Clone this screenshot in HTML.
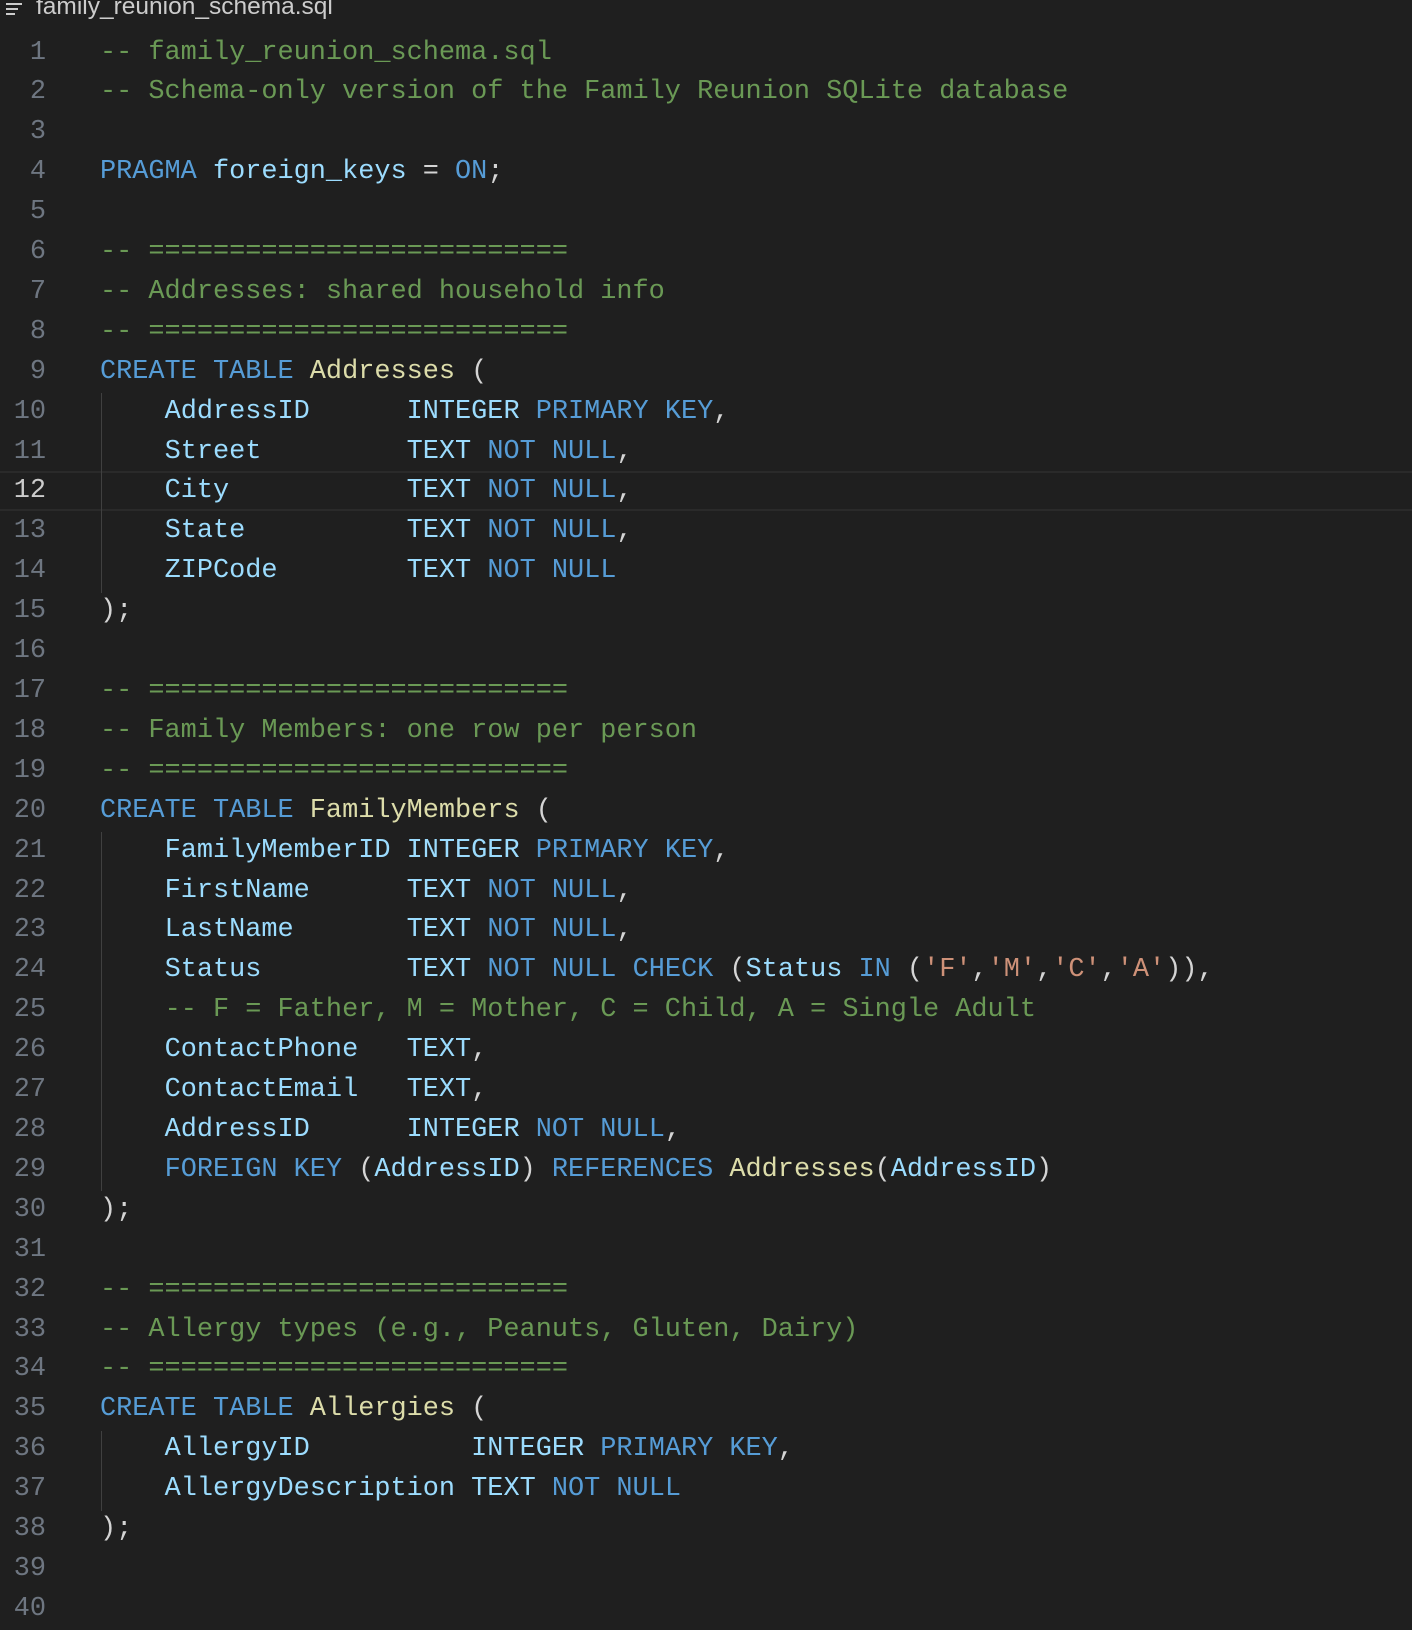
<!DOCTYPE html>
<html><head><meta charset="utf-8"><style>
html,body{margin:0;padding:0;background:#1f1f1f;width:1412px;height:1603px;overflow:hidden}
.title{position:absolute;left:36px;top:-7px;font-family:"Liberation Sans",sans-serif;font-size:24.5px;color:#cccccc;white-space:nowrap}
.ticon{position:absolute;left:6px;top:3px;width:16px}
.ticon i{display:block;height:2px;background:#cccccc;margin-bottom:3px}
.cur{position:absolute;left:0;right:0;top:471px;height:36px;border-top:2px solid #2a2a2a;border-bottom:2px solid #2a2a2a}
.code{position:absolute;left:0;top:33.5px;font-family:"Liberation Mono",monospace;font-size:26.9px;line-height:39.9px;white-space:pre;color:#d4d4d4}
.ln{position:absolute;left:0;width:46px;text-align:right;color:#6e7681}
.ln b{font-weight:normal;color:#cccccc}
.src{position:absolute;left:100px}
.c{color:#6a9955}.k{color:#569cd6}.v{color:#9cdcfe}.t{color:#dcdcaa}.s{color:#ce9178}
.g{position:absolute;left:101px;width:1px;background:#404040}
</style></head><body>
<div class="ticon"><i></i><i style="width:12px"></i><i style="width:9px"></i></div>
<div class="title">family_reunion_schema.sql</div>
<div class="cur"></div>
<div class="g" style="top:393px;height:200px"></div>
<div class="g" style="top:832px;height:359px"></div>
<div class="g" style="top:1431px;height:80px"></div>
<div class="code"><div class="ln">1
2
3
4
5
6
7
8
9
10
11
<b>12</b>
13
14
15
16
17
18
19
20
21
22
23
24
25
26
27
28
29
30
31
32
33
34
35
36
37
38
39
40</div><div class="src"><span class="c">-- family_reunion_schema.sql</span>
<span class="c">-- Schema-only version of the Family Reunion SQLite database</span>

<span class="k">PRAGMA</span> <span class="v">foreign_keys</span> = <span class="k">ON</span>;

<span class="c">-- ==========================</span>
<span class="c">-- Addresses: shared household info</span>
<span class="c">-- ==========================</span>
<span class="k">CREATE</span> <span class="k">TABLE</span> <span class="t">Addresses</span> (
    <span class="v">AddressID</span>      <span class="v">INTEGER</span> <span class="k">PRIMARY KEY</span>,
    <span class="v">Street</span>         <span class="v">TEXT</span> <span class="k">NOT NULL</span>,
    <span class="v">City</span>           <span class="v">TEXT</span> <span class="k">NOT NULL</span>,
    <span class="v">State</span>          <span class="v">TEXT</span> <span class="k">NOT NULL</span>,
    <span class="v">ZIPCode</span>        <span class="v">TEXT</span> <span class="k">NOT NULL</span>
);

<span class="c">-- ==========================</span>
<span class="c">-- Family Members: one row per person</span>
<span class="c">-- ==========================</span>
<span class="k">CREATE</span> <span class="k">TABLE</span> <span class="t">FamilyMembers</span> (
    <span class="v">FamilyMemberID</span> <span class="v">INTEGER</span> <span class="k">PRIMARY KEY</span>,
    <span class="v">FirstName</span>      <span class="v">TEXT</span> <span class="k">NOT NULL</span>,
    <span class="v">LastName</span>       <span class="v">TEXT</span> <span class="k">NOT NULL</span>,
    <span class="v">Status</span>         <span class="v">TEXT</span> <span class="k">NOT NULL</span> <span class="k">CHECK</span> (<span class="v">Status</span> <span class="k">IN</span> (<span class="s">'F'</span>,<span class="s">'M'</span>,<span class="s">'C'</span>,<span class="s">'A'</span>)),
    <span class="c">-- F = Father, M = Mother, C = Child, A = Single Adult</span>
    <span class="v">ContactPhone</span>   <span class="v">TEXT</span>,
    <span class="v">ContactEmail</span>   <span class="v">TEXT</span>,
    <span class="v">AddressID</span>      <span class="v">INTEGER</span> <span class="k">NOT NULL</span>,
    <span class="k">FOREIGN KEY</span> (<span class="v">AddressID</span>) <span class="k">REFERENCES</span> <span class="t">Addresses</span>(<span class="v">AddressID</span>)
);

<span class="c">-- ==========================</span>
<span class="c">-- Allergy types (e.g., Peanuts, Gluten, Dairy)</span>
<span class="c">-- ==========================</span>
<span class="k">CREATE</span> <span class="k">TABLE</span> <span class="t">Allergies</span> (
    <span class="v">AllergyID</span>          <span class="v">INTEGER</span> <span class="k">PRIMARY KEY</span>,
    <span class="v">AllergyDescription</span> <span class="v">TEXT</span> <span class="k">NOT NULL</span>
);

</div></div>
</body></html>
